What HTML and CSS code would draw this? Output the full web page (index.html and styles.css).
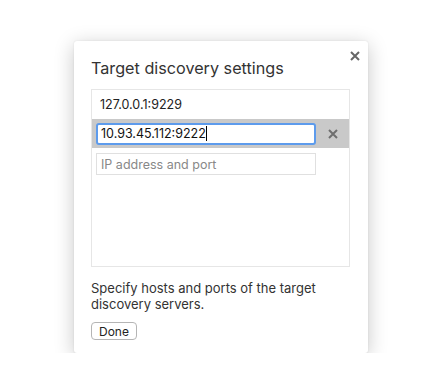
FILE: index.html
```html
<!DOCTYPE html>
<html lang="en">
<head>
    <meta charset="UTF-8">
    <title>Target discovery settings</title>
    <link rel="stylesheet" href="styles.css">
</head>
<body>
    <div class="dialog">
        <button class="close-button" aria-label="Close">
            <svg width="10" height="10" viewBox="0 0 10 10"><path d="M1 1L9 9M9 1L1 9" stroke="#666" stroke-width="2"/></svg>
        </button>
        <h1 class="title">Target discovery settings</h1>

        <div class="list">
            <div class="list-item">
                <span class="item-text">127.0.0.1:9229</span>
            </div>
            <div class="list-item editing">
                <div class="edit-box focused">10.93.45.112:9222<span class="caret"></span></div>
                <span class="remove">
                    <svg width="10" height="10" viewBox="0 0 10 10"><path d="M1 1L9 9M9 1L1 9" stroke="#6e6e6e" stroke-width="2"/></svg>
                </span>
            </div>
            <div class="list-item">
                <div class="edit-box placeholder">IP address and port</div>
            </div>
        </div>

        <p class="help">Specify hosts and ports of the target discovery servers.</p>

        <button class="done-button">Done</button>
    </div>
</body>
</html>
```

FILE: styles.css
```css
body {
    margin: 0;
    background: #fff;
    font-family: Inter, "Liberation Sans", sans-serif;
    color: #222;
}
.dialog {
    position: relative;
    box-sizing: border-box;
    width: 294px;
    height: 312px;
    margin: 41px 0 0 74px;
    padding: 17px 18px 0 17px;
    background: #fff;
    border-radius: 3px;
    box-shadow: 0 4px 20px rgba(0,0,0,0.22), 0 0 2px rgba(0,0,0,0.1);
}
.close-button {
    position: absolute;
    top: 9px;
    right: 7px;
    width: 12px;
    height: 12px;
    padding: 0;
    border: none;
    background: none;
    display: flex;
    align-items: center;
    justify-content: center;
}
.title {
    margin: 0 0 11px;
    font-size: 16.2px;
    font-weight: 400;
    line-height: 20px;
    color: #333;
}
.list {
    height: 178px;
    box-sizing: border-box;
    border: 1px solid #e6e6e6;
}
.list-item {
    display: flex;
    align-items: center;
    height: 29px;
    font-size: 12.5px;
}
.item-text {
    padding-left: 8px;
    color: #222;
}
.editing {
    background: #c9c9c9;
}
.edit-box {
    box-sizing: border-box;
    width: 220px;
    height: 22px;
    margin-left: 4px;
    padding-left: 4px;
    display: flex;
    align-items: center;
    background: #fff;
    border: 1px solid #e0e0e0;
}
.focused {
    border: 2px solid #5d9bec;
    border-radius: 3px;
    padding-left: 3px;
    color: #111;
}
.caret {
    display: inline-block;
    width: 1px;
    height: 15px;
    background: #000;
}
.placeholder {
    color: #888;
    margin-top: 3px;
}
.remove {
    flex: 1;
    display: flex;
    justify-content: center;
}
.help {
    margin: 13px 0 0;
    font-size: 13px;
    line-height: 16px;
    color: #333;
}
.done-button {
    margin-top: 10px;
    font-family: inherit;
    font-size: 12px;
    height: 18px;
    padding: 0 7px;
    background: #fff;
    border: 1px solid #b5b5b5;
    border-radius: 4px;
    color: #222;
}
```
